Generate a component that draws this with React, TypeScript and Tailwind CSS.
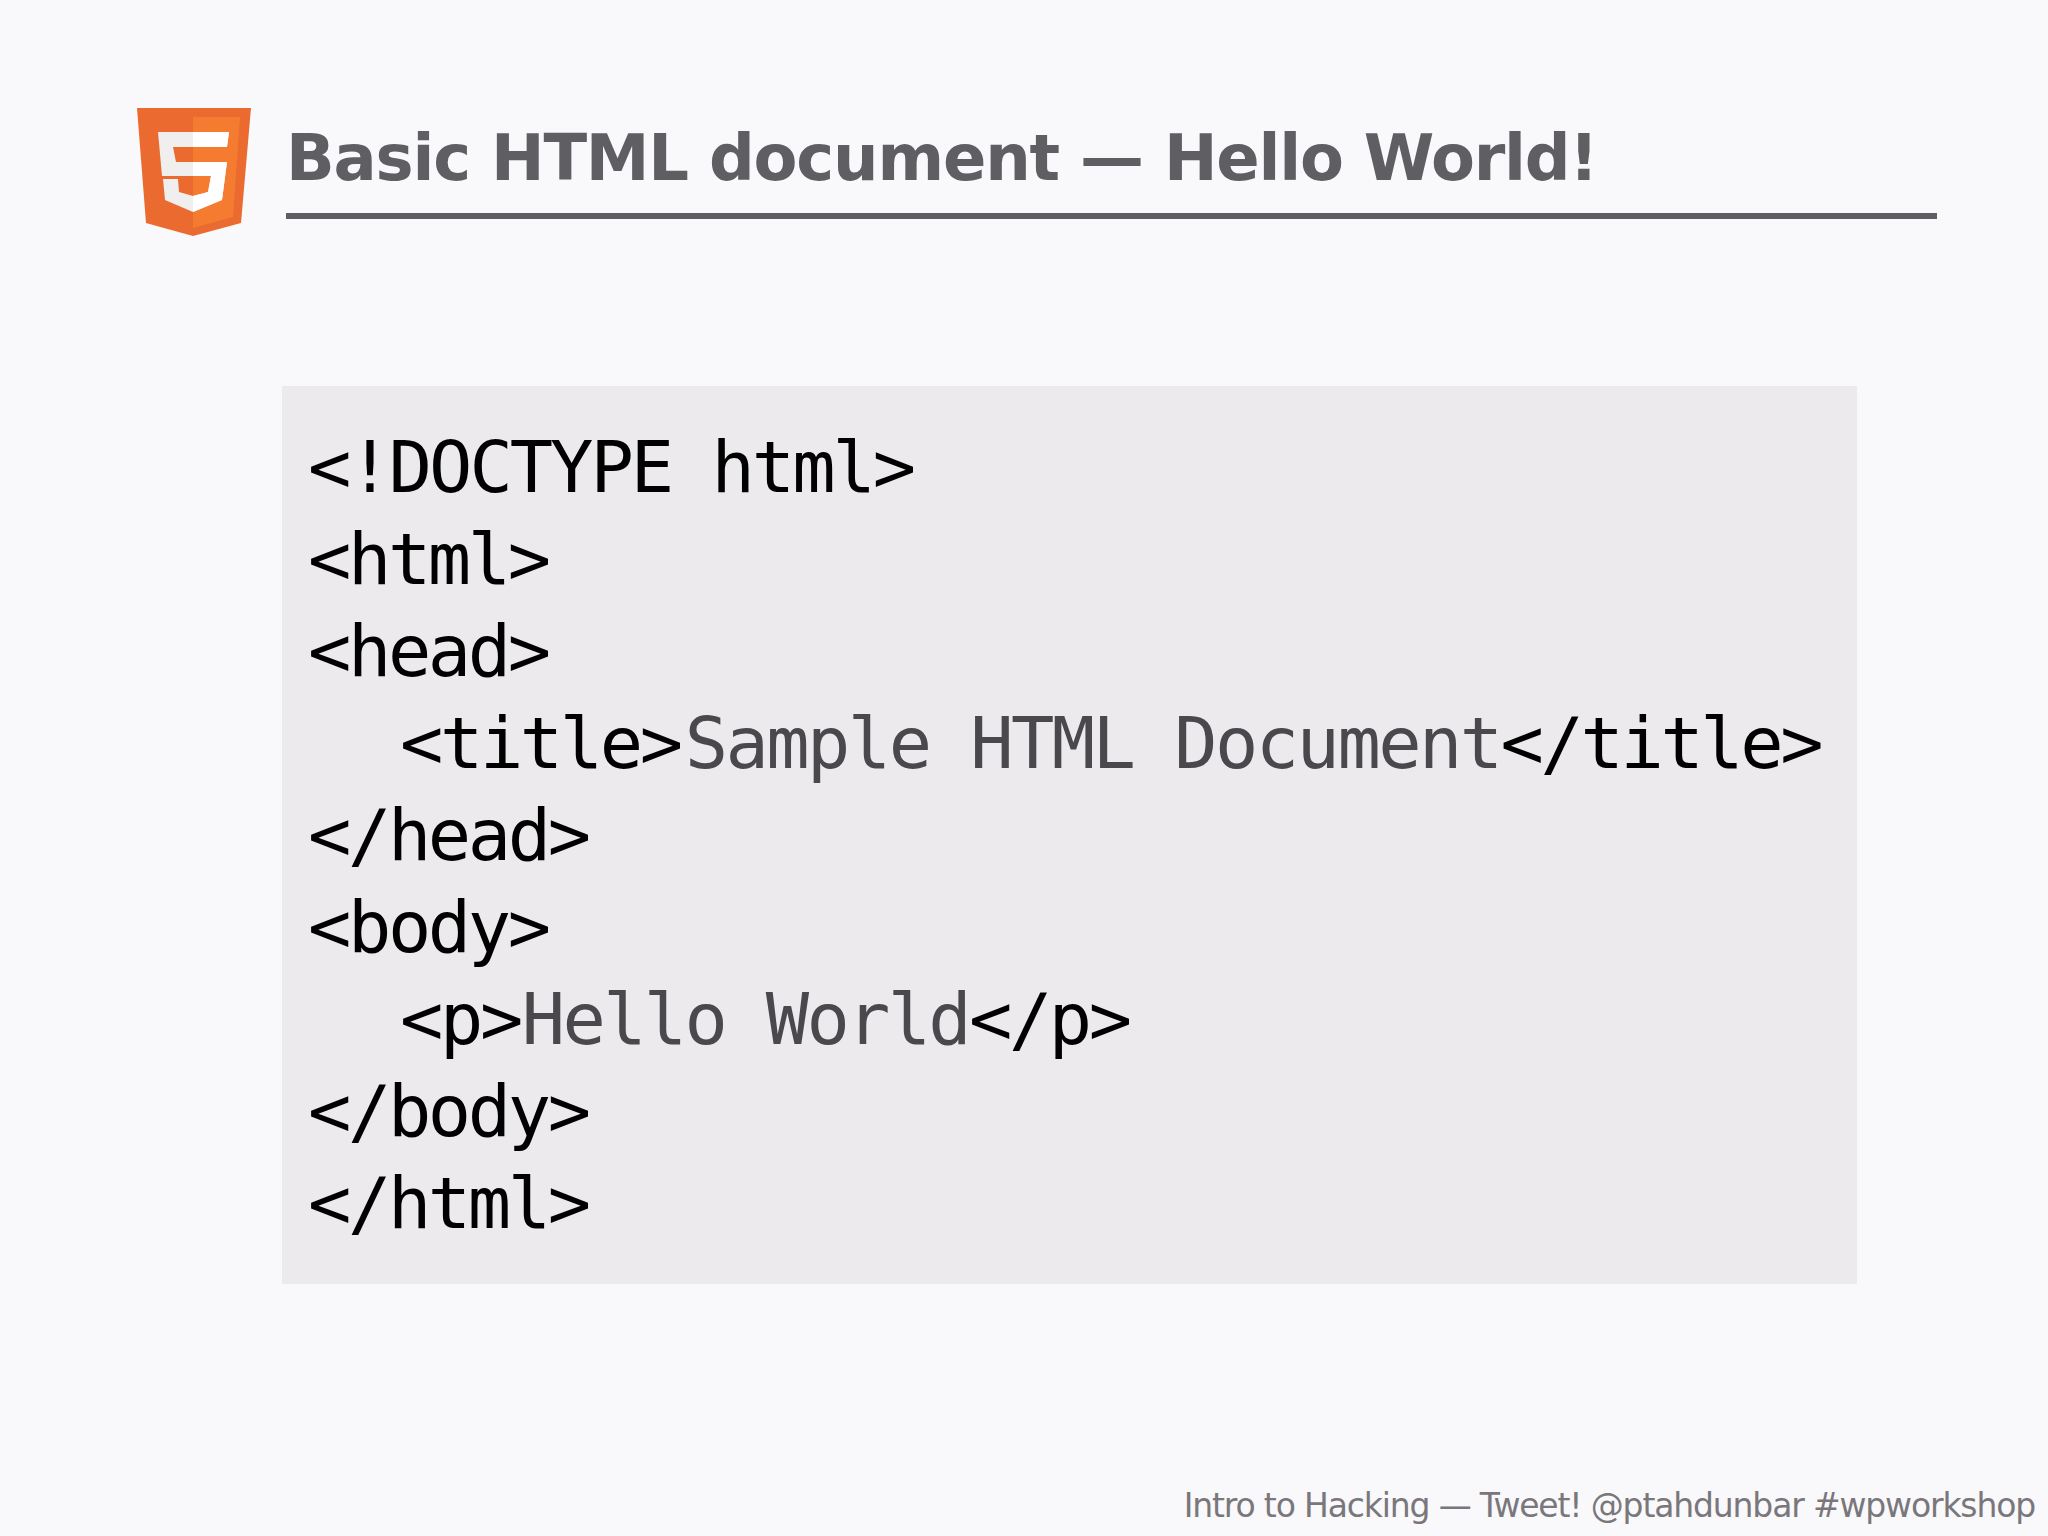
const mono = "font-['DejaVu_Sans_Mono',monospace]";

function Logo() {
  return (
    <svg width="116" height="130" viewBox="0 0 116 130" className="shrink-0">
      <polygon points="0,0 114,0 104,115 56,128 9,115" fill="#ea6a2f" />
      <polygon points="56,9 103,9 96,109 56,120" fill="#f47b30" />
      <polygon points="21,24 92,24 90,39 36,39 39,54 90,54 85,92 56,104 28,92 26,71 41,71 42,84 56,88 71,84 74,68 25,68" fill="#f0efee" />
      <polygon points="56,24 92,24 90,39 56,39 56,54 90,54 85,92 56,104 56,88 71,84 74,68 56,68" fill="#ffffff" />
    </svg>
  );
}

function Line({ children, indent }: { children: React.ReactNode; indent?: boolean }) {
  return <div className={indent ? "h-[92px] pl-[92px] whitespace-pre" : "h-[92px] whitespace-pre"}>{children}</div>;
}

export default function App() {
  return (
    <div className="w-[2048px] h-[1536px] bg-[#f9f8fa] flex flex-col overflow-hidden relative">
      <div className="flex items-start pl-[137px] pr-[111px] pt-[108px]">
        <Logo />
        <div className="flex-1 ml-[33px] pt-[9px]">
          <div className="h-[96px] border-b-[6px] border-[#5f5e62] font-['DejaVu_Sans',sans-serif] font-bold text-[#5f5e62] text-[64px] leading-[82px] whitespace-pre tracking-[-1.2px] box-content">
            Basic HTML document — Hello World!
          </div>
        </div>
      </div>
      <div className={`ml-[282px] mt-[148px] w-[1575px] h-[898px] bg-[#ecEaed] pl-[26px] pt-[35px] text-black text-[72px] leading-[92px] tracking-[-3.4px] ${mono}`}>
        <Line><span className="tracking-[-3px]">{"<!DOCTYPE html>"}</span></Line>
        <Line>{"<html>"}</Line>
        <Line>{"<head>"}</Line>
        <Line indent>{"<title>"}<span className="ml-[5px] text-[#4a484c] tracking-[-2.55px]">Sample HTML Document</span>{"</title>"}</Line>
        <Line>{"</head>"}</Line>
        <Line>{"<body>"}</Line>
        <Line indent>{"<p>"}<span className="ml-[2px] text-[#4a484c] tracking-[-2.7px]">Hello World</span>{"</p>"}</Line>
        <Line>{"</body>"}</Line>
        <Line>{"</html>"}</Line>
      </div>
      <div className="mt-auto pb-[8px] pr-[13px] text-right font-['DejaVu_Sans',sans-serif] text-[#79777b] text-[33px] leading-[44px] whitespace-pre tracking-[-1.15px]">
        Intro to Hacking — Tweet! @ptahdunbar #wpworkshop
      </div>
    </div>
  );
}
